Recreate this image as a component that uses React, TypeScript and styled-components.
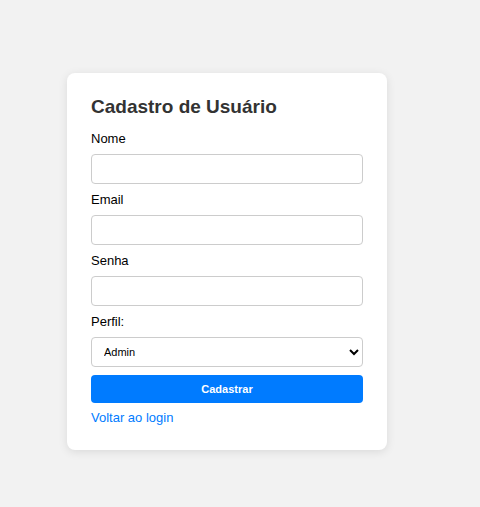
import React from "react";
import styled, { createGlobalStyle } from "styled-components";

const Global = createGlobalStyle`
  html, body { margin: 0; padding: 0; background: #f2f2f2; }
  body { font-family: "Liberation Sans", Arial, sans-serif; }
`;

const Page = styled.div`
  min-height: 507px;
  box-sizing: border-box;
  padding: 73px 0 0 67px;
`;

const Card = styled.form`
  width: 320px;
  box-sizing: border-box;
  background: #fff;
  border-radius: 8px;
  box-shadow: 0 2px 10px rgba(0, 0, 0, 0.1);
  padding: 23px 24px 24px;
  display: flex;
  flex-direction: column;
`;

const Title = styled.h2`
  margin: 0 0 13px;
  font-size: 19px;
  font-weight: bold;
  color: #333;
  line-height: 22px;
`;

const Label = styled.label`
  display: block;
  font-size: 13px;
  line-height: 16px;
  color: #000;
  margin-bottom: 7px;
`;

const Input = styled.input`
  box-sizing: border-box;
  width: 100%;
  height: 30px;
  border: 1px solid #ccc;
  border-radius: 4px;
  margin: 0 0 8px;
  padding: 0 8px;
  font-family: inherit;
  font-size: 13px;
  background: #fff;
`;

const Select = styled.select`
  box-sizing: border-box;
  width: 100%;
  height: 30px;
  border: 1px solid #ccc;
  border-radius: 4px;
  margin: 0 0 8px;
  padding: 0 8px;
  font-family: inherit;
  font-size: 11px;
  color: #000;
  background: #fff;
`;

const Button = styled.button`
  height: 28px;
  width: 100%;
  border: none;
  border-radius: 4px;
  background: #007bff;
  color: #fff;
  font-family: inherit;
  font-size: 11px;
  font-weight: bold;
  cursor: pointer;
  margin-bottom: 7px;
`;

const Footer = styled.div`
  font-size: 13px;
  line-height: 16px;
`;

const Link = styled.a`
  color: #007bff;
  text-decoration: none;
`;

export default function App() {
  return (
    <>
      <Global />
      <Page>
        <Card onSubmit={(e) => e.preventDefault()}>
          <Title>Cadastro de Usuário</Title>
          <Label htmlFor="nome">Nome</Label>
          <Input id="nome" type="text" />
          <Label htmlFor="email">Email</Label>
          <Input id="email" type="email" />
          <Label htmlFor="senha">Senha</Label>
          <Input id="senha" type="password" />
          <Label htmlFor="perfil">Perfil:</Label>
          <Select id="perfil" defaultValue="admin">
            <option value="admin">Admin</option>
            <option value="usuario">Usuário</option>
          </Select>
          <Button type="submit">Cadastrar</Button>
          <Footer>
            <Link href="#">Voltar ao login</Link>
          </Footer>
        </Card>
      </Page>
    </>
  );
}
